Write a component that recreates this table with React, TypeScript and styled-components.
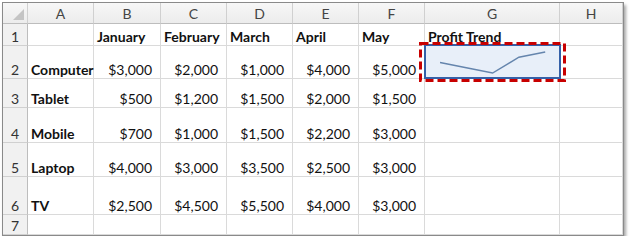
import { Fragment } from "react";
import styled, { createGlobalStyle } from "styled-components";

const GlobalStyle = createGlobalStyle`
  body {
    margin: 0;
    background: #fff;
    font-family: Lato, "Liberation Sans", sans-serif;
  }
`;

const Frame = styled.div`
  margin: 2px 0 0 2px;
  width: 620px;
  border: 1px solid #8a8a8a;
  box-shadow: 2px 3px 3px rgba(0, 0, 0, 0.35);
  background: #fff;
`;

const Sheet = styled.div`
  display: grid;
  grid-template-columns: 25px 66px 67px 66px 66px 66px 66px 135px 63px;
  grid-template-rows: 21px 22px 33px 29px 35px 34px 38px 20px;
`;

const ColHead = styled.div`
  display: flex;
  align-items: center;
  justify-content: center;
  background: linear-gradient(#f7f7f7, #ececec);
  border-right: 1px solid #d0d0d0;
  border-bottom: 1px solid #bdbdbd;
  color: #444;
  font-size: 14px;
`;

const Corner = styled(ColHead)`
  position: relative;
  &::after {
    content: "";
    position: absolute;
    right: 3px;
    bottom: 3px;
    border-left: 11px solid transparent;
    border-bottom: 11px solid #c4c4c4;
  }
`;

const RowHead = styled.div`
  display: flex;
  align-items: flex-end;
  justify-content: center;
  background: #f1f1f1;
  border-right: 1px solid #bdbdbd;
  border-bottom: 1px solid #d0d0d0;
  color: #333;
  font-size: 14px;
  line-height: 16px;
`;

const Cell = styled.div<{ $num?: boolean; $bold?: boolean }>`
  position: relative;
  display: flex;
  align-items: flex-end;
  justify-content: ${(p) => (p.$num ? "flex-end" : "flex-start")};
  padding: 0 ${(p) => (p.$num ? "8px" : "0")} 0 ${(p) => (p.$num ? "0" : "3px")};
  border-right: 1px solid #dadada;
  border-bottom: 1px solid #dadada;
  color: #111;
  font-size: 14px;
  line-height: 16px;
  font-weight: ${(p) => (p.$bold ? 700 : 400)};
  white-space: nowrap;
`;

const Selection = styled.div`
  position: absolute;
  left: -1px;
  top: -2px;
  width: 137px;
  height: 35px;
  box-sizing: border-box;
  border: 2px solid #3560a8;
  background: #e8eff9;
  z-index: 1;
`;

const Marquee = styled.svg`
  position: absolute;
  left: -6px;
  top: -4px;
  z-index: 2;
  overflow: visible;
`;

const Spark = styled.svg`
  position: absolute;
  left: 0;
  top: 0;
  z-index: 3;
`;

const cols = ["A", "B", "C", "D", "E", "F", "G", "H"];
const months = ["January", "February", "March", "April", "May"];
const rows: [string, number[]][] = [
  ["Computer", [3000, 2000, 1000, 4000, 5000]],
  ["Tablet", [500, 1200, 1500, 2000, 1500]],
  ["Mobile", [700, 1000, 1500, 2200, 3000]],
  ["Laptop", [4000, 3000, 3500, 2500, 3000]],
  ["TV", [2500, 4500, 5500, 4000, 3000]],
];

const money = (n: number) => "$" + n.toLocaleString("en-US");

function Sparkline({ data }: { data: number[] }) {
  const min = Math.min(...data);
  const max = Math.max(...data);
  const pts = data
    .map((v, i) => `${15 + i * 26.3},${27 - ((v - min) / (max - min)) * 21}`)
    .join(" ");
  return (
    <Spark width="135" height="33">
      <polyline points={pts} fill="none" stroke="#6585ad" strokeWidth="1.4" />
    </Spark>
  );
}

export default function App() {
  return (
    <>
      <GlobalStyle />
      <Frame>
        <Sheet>
          <Corner />
          {cols.map((c) => (
            <ColHead key={c}>{c}</ColHead>
          ))}

          <RowHead>1</RowHead>
          <Cell />
          {months.map((m) => (
            <Cell key={m} $bold>
              {m}
            </Cell>
          ))}
          <Cell $bold>Profit Trend</Cell>
          <Cell />

          {rows.map(([name, vals], r) => (
            <Fragment key={name}>
              <RowHead>{r + 2}</RowHead>
              <Cell $bold>{name}</Cell>
              {vals.map((v, i) => (
                <Cell key={i} $num>
                  {money(v)}
                </Cell>
              ))}
              <Cell>
                {r === 0 && (
                  <>
                    <Selection />
                    <Sparkline data={vals} />
                    <Marquee width="147" height="40">
                      <rect
                        x="1.5"
                        y="1.5"
                        width="144"
                        height="37"
                        fill="none"
                        stroke="#c80000"
                        strokeWidth="3"
                        strokeDasharray="8 4"
                      />
                    </Marquee>
                  </>
                )}
              </Cell>
              <Cell />
            </Fragment>
          ))}

          <RowHead>7</RowHead>
          {cols.map((c) => (
            <Cell key={"7" + c} />
          ))}
        </Sheet>
      </Frame>
    </>
  );
}
